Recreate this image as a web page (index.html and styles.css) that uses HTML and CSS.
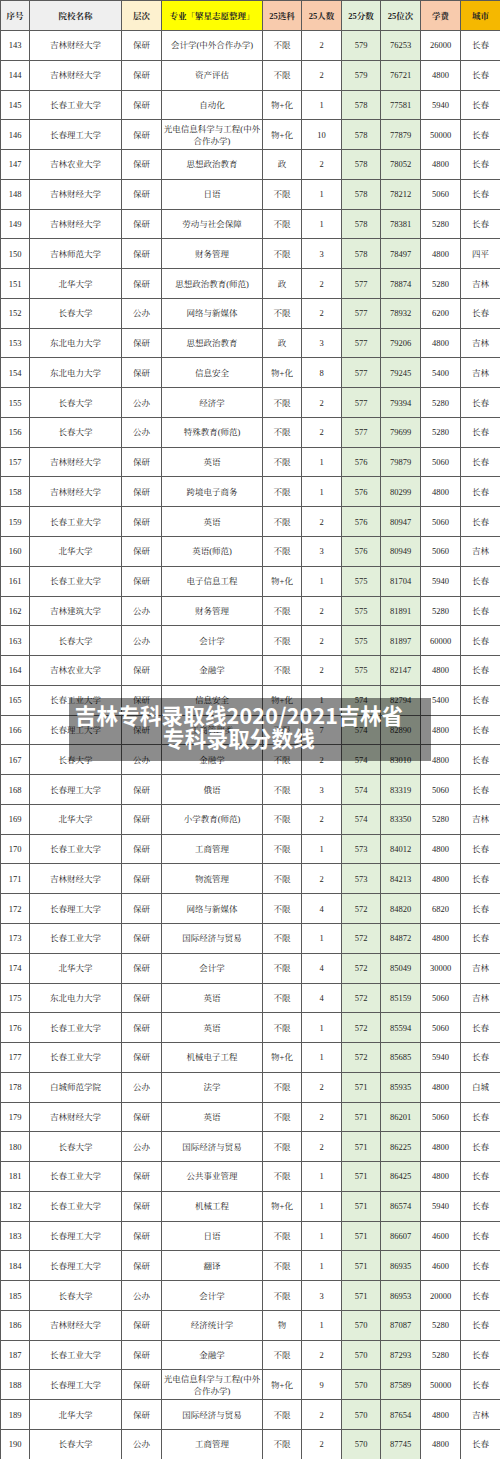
FILE: index.html
```html
<!DOCTYPE html>
<html lang="zh-CN">
<head>
<meta charset="utf-8">
<title>吉林专科录取线</title>
<link rel="stylesheet" href="styles.css">
</head>
<body>
<div class="page">
<table class="grid">
<colgroup>
<col class="c1"><col class="c2"><col class="c3"><col class="c4"><col class="c5"><col class="c6"><col class="c7"><col class="c8"><col class="c9"><col class="c10">
</colgroup>
<thead>
<tr>
<th class="h-gray">序号</th><th class="h-gray">院校名称</th><th class="h-cream">层次</th><th class="h-yellow">专业「繁星志愿整理」</th><th class="h-salmon">25选科</th><th class="h-salmon">25人数</th><th class="h-green">25分数</th><th class="h-green">25位次</th><th class="h-salmon">学费</th><th class="h-gold">城市</th>
</tr>
</thead>
<tbody>
<tr><td>143</td><td>吉林财经大学</td><td>保研</td><td>会计学(中外合作办学)</td><td>不限</td><td>2</td><td class="g">579</td><td class="g">76253</td><td>26000</td><td>长春</td></tr>
<tr><td>144</td><td>吉林财经大学</td><td>保研</td><td>资产评估</td><td>不限</td><td>2</td><td class="g">579</td><td class="g">76721</td><td>4800</td><td>长春</td></tr>
<tr><td>145</td><td>长春工业大学</td><td>保研</td><td>自动化</td><td>物+化</td><td>1</td><td class="g">578</td><td class="g">77581</td><td>5940</td><td>长春</td></tr>
<tr><td>146</td><td>长春理工大学</td><td>保研</td><td>光电信息科学与工程(中外<br>合作办学)</td><td>物+化</td><td>10</td><td class="g">578</td><td class="g">77879</td><td>50000</td><td>长春</td></tr>
<tr><td>147</td><td>吉林农业大学</td><td>保研</td><td>思想政治教育</td><td>政</td><td>2</td><td class="g">578</td><td class="g">78052</td><td>4800</td><td>长春</td></tr>
<tr><td>148</td><td>吉林财经大学</td><td>保研</td><td>日语</td><td>不限</td><td>1</td><td class="g">578</td><td class="g">78212</td><td>5060</td><td>长春</td></tr>
<tr><td>149</td><td>吉林财经大学</td><td>保研</td><td>劳动与社会保障</td><td>不限</td><td>1</td><td class="g">578</td><td class="g">78381</td><td>5280</td><td>长春</td></tr>
<tr><td>150</td><td>吉林师范大学</td><td>保研</td><td>财务管理</td><td>不限</td><td>3</td><td class="g">578</td><td class="g">78497</td><td>4800</td><td>四平</td></tr>
<tr><td>151</td><td>北华大学</td><td>保研</td><td>思想政治教育(师范)</td><td>政</td><td>2</td><td class="g">577</td><td class="g">78874</td><td>5280</td><td>吉林</td></tr>
<tr><td>152</td><td>长春大学</td><td>公办</td><td>网络与新媒体</td><td>不限</td><td>2</td><td class="g">577</td><td class="g">78932</td><td>6200</td><td>长春</td></tr>
<tr><td>153</td><td>东北电力大学</td><td>保研</td><td>思想政治教育</td><td>政</td><td>3</td><td class="g">577</td><td class="g">79206</td><td>4800</td><td>吉林</td></tr>
<tr><td>154</td><td>东北电力大学</td><td>保研</td><td>信息安全</td><td>物+化</td><td>8</td><td class="g">577</td><td class="g">79245</td><td>5400</td><td>吉林</td></tr>
<tr><td>155</td><td>长春大学</td><td>公办</td><td>经济学</td><td>不限</td><td>2</td><td class="g">577</td><td class="g">79394</td><td>5280</td><td>长春</td></tr>
<tr><td>156</td><td>长春大学</td><td>公办</td><td>特殊教育(师范)</td><td>不限</td><td>2</td><td class="g">577</td><td class="g">79699</td><td>5280</td><td>长春</td></tr>
<tr><td>157</td><td>吉林财经大学</td><td>保研</td><td>英语</td><td>不限</td><td>1</td><td class="g">576</td><td class="g">79879</td><td>5060</td><td>长春</td></tr>
<tr><td>158</td><td>吉林财经大学</td><td>保研</td><td>跨境电子商务</td><td>不限</td><td>1</td><td class="g">576</td><td class="g">80299</td><td>4800</td><td>长春</td></tr>
<tr><td>159</td><td>长春工业大学</td><td>保研</td><td>英语</td><td>不限</td><td>2</td><td class="g">576</td><td class="g">80947</td><td>5060</td><td>长春</td></tr>
<tr><td>160</td><td>北华大学</td><td>保研</td><td>英语(师范)</td><td>不限</td><td>3</td><td class="g">576</td><td class="g">80949</td><td>5060</td><td>吉林</td></tr>
<tr><td>161</td><td>长春工业大学</td><td>保研</td><td>电子信息工程</td><td>物+化</td><td>1</td><td class="g">575</td><td class="g">81704</td><td>5940</td><td>长春</td></tr>
<tr><td>162</td><td>吉林建筑大学</td><td>公办</td><td>财务管理</td><td>不限</td><td>2</td><td class="g">575</td><td class="g">81891</td><td>5280</td><td>长春</td></tr>
<tr><td>163</td><td>长春大学</td><td>公办</td><td>会计学</td><td>不限</td><td>2</td><td class="g">575</td><td class="g">81897</td><td>60000</td><td>长春</td></tr>
<tr><td>164</td><td>吉林农业大学</td><td>保研</td><td>金融学</td><td>不限</td><td>2</td><td class="g">575</td><td class="g">82147</td><td>4800</td><td>长春</td></tr>
<tr><td>165</td><td>长春工业大学</td><td>保研</td><td>信息安全</td><td>物+化</td><td>1</td><td class="g">574</td><td class="g">82794</td><td>5400</td><td>长春</td></tr>
<tr><td>166</td><td>长春理工大学</td><td>保研</td><td>工商管理类</td><td>不限</td><td>7</td><td class="g">574</td><td class="g">82890</td><td>4800</td><td>长春</td></tr>
<tr><td>167</td><td>长春大学</td><td>公办</td><td>金融学</td><td>不限</td><td>2</td><td class="g">574</td><td class="g">83010</td><td>4800</td><td>长春</td></tr>
<tr><td>168</td><td>长春理工大学</td><td>保研</td><td>俄语</td><td>不限</td><td>3</td><td class="g">574</td><td class="g">83319</td><td>5060</td><td>长春</td></tr>
<tr><td>169</td><td>北华大学</td><td>保研</td><td>小学教育(师范)</td><td>不限</td><td>2</td><td class="g">574</td><td class="g">83350</td><td>5280</td><td>吉林</td></tr>
<tr><td>170</td><td>长春工业大学</td><td>保研</td><td>工商管理</td><td>不限</td><td>1</td><td class="g">573</td><td class="g">84012</td><td>4800</td><td>长春</td></tr>
<tr><td>171</td><td>吉林财经大学</td><td>保研</td><td>物流管理</td><td>不限</td><td>2</td><td class="g">573</td><td class="g">84213</td><td>4800</td><td>长春</td></tr>
<tr><td>172</td><td>长春理工大学</td><td>保研</td><td>网络与新媒体</td><td>不限</td><td>4</td><td class="g">572</td><td class="g">84820</td><td>6820</td><td>长春</td></tr>
<tr><td>173</td><td>长春工业大学</td><td>保研</td><td>国际经济与贸易</td><td>不限</td><td>1</td><td class="g">572</td><td class="g">84872</td><td>4800</td><td>长春</td></tr>
<tr><td>174</td><td>北华大学</td><td>保研</td><td>会计学</td><td>不限</td><td>4</td><td class="g">572</td><td class="g">85049</td><td>30000</td><td>吉林</td></tr>
<tr><td>175</td><td>东北电力大学</td><td>保研</td><td>英语</td><td>不限</td><td>4</td><td class="g">572</td><td class="g">85159</td><td>5060</td><td>吉林</td></tr>
<tr><td>176</td><td>长春工业大学</td><td>保研</td><td>英语</td><td>不限</td><td>1</td><td class="g">572</td><td class="g">85594</td><td>5060</td><td>长春</td></tr>
<tr><td>177</td><td>长春工业大学</td><td>保研</td><td>机械电子工程</td><td>物+化</td><td>1</td><td class="g">572</td><td class="g">85685</td><td>5940</td><td>长春</td></tr>
<tr><td>178</td><td>白城师范学院</td><td>公办</td><td>法学</td><td>不限</td><td>2</td><td class="g">571</td><td class="g">85935</td><td>4800</td><td>白城</td></tr>
<tr><td>179</td><td>吉林财经大学</td><td>保研</td><td>英语</td><td>不限</td><td>2</td><td class="g">571</td><td class="g">86201</td><td>5060</td><td>长春</td></tr>
<tr><td>180</td><td>长春大学</td><td>公办</td><td>国际经济与贸易</td><td>不限</td><td>2</td><td class="g">571</td><td class="g">86225</td><td>4800</td><td>长春</td></tr>
<tr><td>181</td><td>长春工业大学</td><td>保研</td><td>公共事业管理</td><td>不限</td><td>1</td><td class="g">571</td><td class="g">86425</td><td>4800</td><td>长春</td></tr>
<tr><td>182</td><td>长春工业大学</td><td>保研</td><td>机械工程</td><td>物+化</td><td>1</td><td class="g">571</td><td class="g">86574</td><td>5940</td><td>长春</td></tr>
<tr><td>183</td><td>长春理工大学</td><td>保研</td><td>日语</td><td>不限</td><td>1</td><td class="g">571</td><td class="g">86607</td><td>4600</td><td>长春</td></tr>
<tr><td>184</td><td>长春理工大学</td><td>保研</td><td>翻译</td><td>不限</td><td>1</td><td class="g">571</td><td class="g">86935</td><td>4600</td><td>长春</td></tr>
<tr><td>185</td><td>长春大学</td><td>公办</td><td>会计学</td><td>不限</td><td>3</td><td class="g">571</td><td class="g">86953</td><td>20000</td><td>长春</td></tr>
<tr><td>186</td><td>吉林财经大学</td><td>保研</td><td>经济统计学</td><td>物</td><td>1</td><td class="g">570</td><td class="g">87087</td><td>5280</td><td>长春</td></tr>
<tr><td>187</td><td>长春工业大学</td><td>保研</td><td>金融学</td><td>不限</td><td>2</td><td class="g">570</td><td class="g">87293</td><td>5280</td><td>长春</td></tr>
<tr><td>188</td><td>长春理工大学</td><td>保研</td><td>光电信息科学与工程(中外<br>合作办学)</td><td>物+化</td><td>9</td><td class="g">570</td><td class="g">87589</td><td>50000</td><td>长春</td></tr>
<tr><td>189</td><td>北华大学</td><td>保研</td><td>国际经济与贸易</td><td>不限</td><td>2</td><td class="g">570</td><td class="g">87654</td><td>4800</td><td>吉林</td></tr>
<tr><td>190</td><td>长春大学</td><td>公办</td><td>工商管理</td><td>不限</td><td>2</td><td class="g">570</td><td class="g">87745</td><td>4800</td><td>长春</td></tr>
</tbody>
</table>
<div class="banner">吉林专科录取线2020/2021吉林省<br>专科录取分数线</div>
</div>
</body>
</html>
```

FILE: styles.css
```css
html, body {
  margin: 0;
  padding: 0;
  background: #ffffff;
}

.page {
  position: relative;
  width: 500px;
  height: 1459px;
  overflow: hidden;
}

.grid {
  width: 500px;
  border-collapse: collapse;
  table-layout: fixed;
  font-family: "Liberation Serif", "Noto Serif CJK SC", "Noto Sans CJK SC", serif;
  font-size: 8.5px;
  color: #262626;
}

.c1 { width: 29px; }
.c2 { width: 92px; }
.c3 { width: 40px; }
.c4 { width: 101px; }
.c5 { width: 39px; }
.c6 { width: 40px; }
.c7 { width: 39px; }
.c8 { width: 40px; }
.c9 { width: 40px; }
.c10 { width: 40px; }

.grid th,
.grid td {
  border: 1px solid #5a5a5a;
  text-align: center;
  vertical-align: middle;
  padding: 0;
  line-height: 12px;
  overflow: hidden;
  white-space: nowrap;
}

.grid thead tr {
  height: 30px;
}

.grid tbody tr {
  height: 29.77px;
}

.grid th {
  font-weight: bold;
  font-size: 8.5px;
}

.h-gray { background: #efefef; }
.h-cream { background: #fdf1cf; }
.h-yellow { background: #ffff00; }
.h-salmon { background: #f8cbad; }
.h-green { background: #e2efda; }
.h-gold { background: #f5b800; }

.grid td.g {
  background: #e2efda;
}

.banner {
  position: absolute;
  left: 69px;
  top: 698px;
  width: 340px;
  height: 57px;
  padding: 5px 22px 1px 0;
  background: rgba(0, 0, 0, 0.45);
  color: #ffffff;
  font-family: "Noto Sans CJK SC", "Noto Sans", sans-serif;
  font-weight: bold;
  font-size: 21.5px;
  letter-spacing: 0.2px;
  line-height: 23px;
  text-align: center;
}
```
